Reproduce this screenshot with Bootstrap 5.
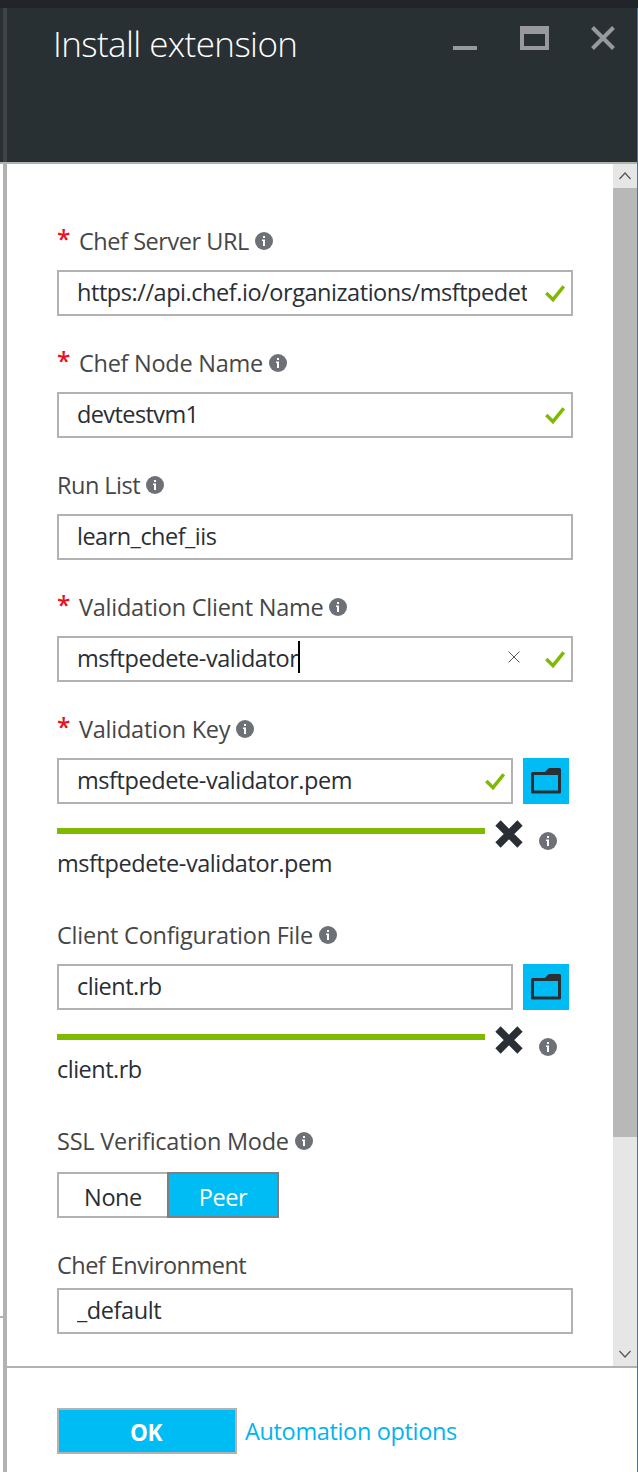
<!DOCTYPE html>
<html lang="en">
<head>
<meta charset="utf-8">
<meta name="viewport" content="width=device-width, initial-scale=1">
<title>Install extension</title>
<link href="https://cdn.jsdelivr.net/npm/bootstrap@5.3.0/dist/css/bootstrap.min.css" rel="stylesheet">
<style>
body{font-family:"Open Sans","Noto Sans",sans-serif;font-size:23.5px;line-height:34px;color:#2a2e35;background:#fff;letter-spacing:-.42px;overflow:hidden}
svg{display:block;flex:none}
.screen{height:1472px}
.top-strip{height:8px;background:#212529}
.behind{width:3px;background:linear-gradient(#293033 0 154px,#b2b2b2 154px 156px,#fff 156px 1308px,#b2b2b2 1308px 1310px,#fff 1310px)}
.edge{width:4px;background:linear-gradient(#3e4347 0 154px,#b2b2b2 154px)}
.outer-edge{width:1px;background:#3c7c9c}
.blade-head{height:156px;background:#293033;border-bottom:2px solid #b2b2b2;padding:12px 22px 0 46px}
.blade-title{font-size:35px;line-height:48px;font-weight:330;letter-spacing:-.6px;color:#fff;margin:0}
.win-icons{margin-top:6px}
.blade-body{height:1202px}
.form-area{padding:60px 40px 0 50px}
.blade-foot{border-top:2px solid #b2b2b2;padding:40px 0 0 50px;gap:8px}
.field{margin-bottom:30px}
.cap{height:46px;color:#464646;gap:5.8px}
.cap-ssl{height:48px}
.cap-env{height:40px}
.star{width:22px;color:#e81123;font-weight:600;letter-spacing:0;line-height:30px;font-size:24.5px}
.cap svg{margin-top:8px}
.box{height:46px;border:2px solid #b2b2b2;border-radius:0;padding:3px 6px 0 18px;font-size:inherit;line-height:34px;color:inherit;letter-spacing:inherit;display:flex;white-space:nowrap}
.box .val{flex:1;overflow:hidden;height:36px}
.box .tick{margin-top:10px}
.box .val-w{width:450px;flex:none;margin-right:18px;letter-spacing:-.45px}
.box.url{padding-right:4px}
.caret{width:2px;height:32px;background:#000}
.clear{margin:10px 25px 0 0}
.pick{width:46px;height:46px;background:#00bcf5;border:0;border-radius:0;padding:10px 8px;margin:0 4px 0 10px}
.upload{height:84px}
.up-col{width:428px;padding-top:24px}
.up-bar{height:6px;border-radius:0;background:#7fba00;margin-bottom:12px}
.up-x{margin:16px 16px 0 10px}
.up-info{margin-top:28px}
.opt{height:46px;border:2px solid #b2b2b2;border-radius:0;padding:4px 0 0;font-size:inherit;line-height:34px;letter-spacing:inherit;color:inherit;text-align:center}
.opt.on{background:#00bcf5;border-color:#7f7f7f;color:#fff;width:112px}
.opt.off{width:110px;border-right:0}
.ok{width:180px;height:46px;border:2px solid #b2b2b2;border-radius:0;background:#00bcf5;color:#fff;font-size:22.5px;font-weight:700;line-height:34px;padding:3px 2px 0 0;letter-spacing:-.5px}
.auto{color:#00b4f0;letter-spacing:-.35px;padding-top:6px;text-decoration:none}
.sb{width:24px;background:#e6e6e6}
.sb-thumb{height:949px;background:#b8b8b8}
.l1{letter-spacing:-.45px}.l2{letter-spacing:-.27px}.l3{letter-spacing:-.24px}.l4{letter-spacing:-.52px}.l5{letter-spacing:-.6px}
</style>
</head>
<body>
<svg width="0" height="0" class="position-absolute">
  <symbol id="info" viewBox="0 0 18 18"><circle cx="9" cy="9" r="9" fill="#6d7076"/><path d="M8 4h2v2H8zM7 7.500h3V14H8V9H7z" fill="#fff"/></symbol>
  <symbol id="tick" viewBox="0 0 20 18"><path d="M1.300 8L8 14.700L18.700 1.300" fill="none" stroke="#7fba00" stroke-width="3.500"/></symbol>
  <symbol id="folder" viewBox="0 0 30 26"><path fill="#2a2e35" fill-rule="evenodd" d="M1.500 4H14L17 .8Q17.600 0 18.500 0H28.500Q30 0 30 1.500V24Q30 25.500 28.500 25.500H1.500Q0 25.500 0 24V5.500Q0 4 1.500 4ZM3 7V22.500H27V7Z"/></symbol>
  <symbol id="cross" viewBox="0 0 28 28"><path d="M3 3L25 25M25 3L3 25" stroke="#2a2e35" stroke-width="7.500"/></symbol>
</svg>
<div class="screen d-flex flex-column">
  <div class="top-strip"></div>
  <div class="d-flex flex-fill">
    <div class="behind"></div>
    <div class="edge"></div>
    <div class="flex-fill d-flex flex-column">
      <header class="blade-head d-flex justify-content-between">
        <h1 class="blade-title">Install extension</h1>
        <svg class="win-icons" width="162" height="24" viewBox="0 0 162 24"><g fill="#97999c"><path d="M0 20h24v4H0z"/><path fill-rule="evenodd" d="M67 0h29v24H67zM71 8v12h21V8z"/></g><path d="M139.500 1.500L160.500 22.500M160.500 1.500L139.500 22.500" stroke="#97999c" stroke-width="4"/></svg>
      </header>
      <main class="blade-body d-flex">
        <div class="form-area flex-fill">
          <div class="field">
            <div class="cap d-flex"><div class="d-flex"><span class="star">*</span><span class="l1">Chef Server URL</span></div><svg width="18" height="18"><use href="#info"/></svg></div>
            <div class="box url form-control"><span class="val val-w">https://api.chef.io/organizations/msftpedet</span><svg class="tick" width="20" height="18"><use href="#tick"/></svg></div>
          </div>
          <div class="field">
            <div class="cap d-flex"><div class="d-flex"><span class="star">*</span><span class="l2">Chef Node Name</span></div><svg width="18" height="18"><use href="#info"/></svg></div>
            <div class="box form-control"><span class="val l5">devtestvm1</span><svg class="tick" width="20" height="18"><use href="#tick"/></svg></div>
          </div>
          <div class="field">
            <div class="cap d-flex"><span class="l4">Run List</span><svg width="18" height="18"><use href="#info"/></svg></div>
            <div class="box form-control"><span class="val l4">learn_chef_iis</span></div>
          </div>
          <div class="field">
            <div class="cap d-flex"><div class="d-flex"><span class="star">*</span><span class="l3">Validation Client Name</span></div><svg width="18" height="18"><use href="#info"/></svg></div>
            <div class="box form-control"><span>msftpedete-validator</span><span class="caret"></span><svg class="clear ms-auto" width="12" height="12" viewBox="0 0 12 12"><path d="M.5.5l11 11M11.500.5l-11 11" stroke="#55585d"/></svg><svg class="tick" width="20" height="18"><use href="#tick"/></svg></div>
          </div>
          <div class="field">
            <div class="cap d-flex"><div class="d-flex"><span class="star">*</span><span class="l3">Validation Key</span></div><svg width="18" height="18"><use href="#info"/></svg></div>
            <div class="d-flex"><div class="box form-control"><span class="val">msftpedete-validator.pem</span><svg class="tick" width="20" height="18"><use href="#tick"/></svg></div><button class="pick btn"><svg width="30" height="26"><use href="#folder"/></svg></button></div>
            <div class="upload d-flex"><div class="up-col"><div class="up-bar progress"></div>msftpedete-validator.pem</div><svg class="up-x" width="28" height="28"><use href="#cross"/></svg><svg class="up-info" width="18" height="18"><use href="#info"/></svg></div>
          </div>
          <div class="field">
            <div class="cap d-flex"><span class="l3">Client Configuration File</span><svg width="18" height="18"><use href="#info"/></svg></div>
            <div class="d-flex"><div class="box form-control"><span class="val l4">client.rb</span></div><button class="pick btn"><svg width="30" height="26"><use href="#folder"/></svg></button></div>
            <div class="upload d-flex"><div class="up-col l4"><div class="up-bar progress"></div>client.rb</div><svg class="up-x" width="28" height="28"><use href="#cross"/></svg><svg class="up-info" width="18" height="18"><use href="#info"/></svg></div>
          </div>
          <div class="field">
            <div class="cap cap-ssl d-flex"><span class="l3">SSL Verification Mode</span><svg width="18" height="18"><use href="#info"/></svg></div>
            <div class="d-flex"><button class="opt off btn">None</button><button class="opt on btn">Peer</button></div>
          </div>
          <div class="field">
            <div class="cap cap-env"><span class="l4">Chef Environment</span></div>
            <div class="box form-control"><span class="val">_default</span></div>
          </div>
        </div>
        <div class="sb"><svg width="24" height="24"><path d="M6.500 15L12 9L17.500 15" fill="none" stroke="#555" stroke-width="1.200"/></svg><div class="sb-thumb"></div><svg width="24" height="229"><path d="M6.500 214L12 220L17.500 214" fill="none" stroke="#555" stroke-width="1.200"/></svg></div>
      </main>
      <footer class="blade-foot d-flex"><button class="ok btn">OK</button><a class="auto">Automation options</a></footer>
    </div>
    <div class="outer-edge"></div>
  </div>
</div>
<script src="https://cdn.jsdelivr.net/npm/bootstrap@5.3.0/dist/js/bootstrap.bundle.min.js"></script>
</body>
</html>
